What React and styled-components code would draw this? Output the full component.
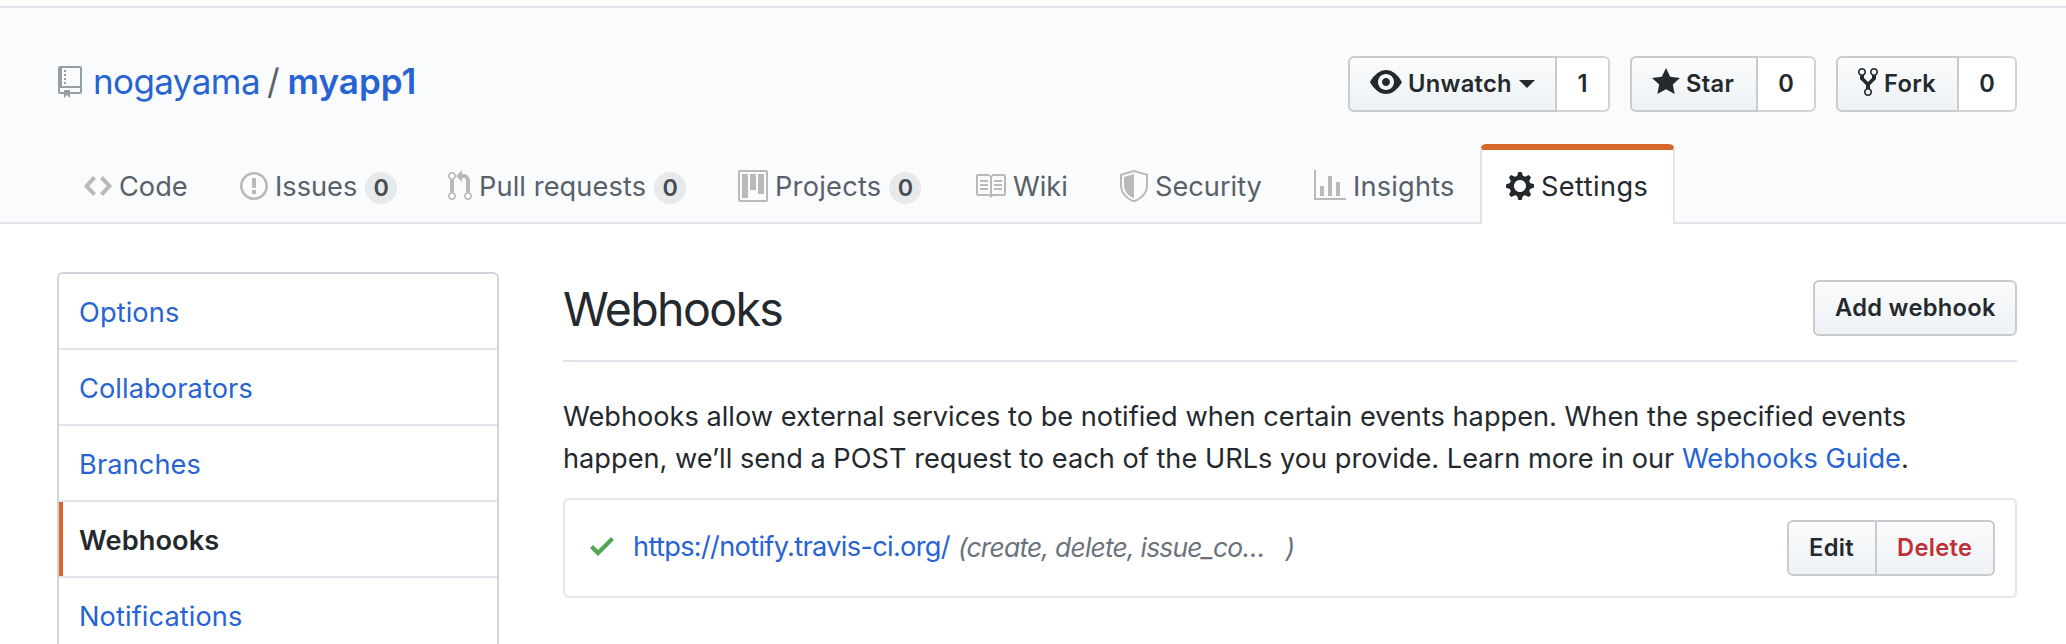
import React from "react";
import styled, { createGlobalStyle, css } from "styled-components";

const c = {
  text: "#24292e",
  muted: "#586069",
  gray: "#6a737d",
  blue: "#2764d2",
  orange: "#d4692b",
  line: "#e1e4e8",
  btnLine: "#c9cbce",
};

const Global = createGlobalStyle`
  * { box-sizing: border-box; }
  html, body { margin: 0; background: #fff; }
  body {
    height: 644px;
    overflow: hidden;
    font-family: Inter, "Liberation Sans", sans-serif;
    font-size: 27.2px;
    line-height: 42px;
    color: ${c.text};
  }
  a { color: inherit; text-decoration: none; }
`;

const PATHS = {
  repo: [12, "M4 9H3V8h1v1zm0-3H3v1h1V6zm0-2H3v1h1V4zm0-2H3v1h1V2zm8-1v12c0 .55-.45 1-1 1H6v2l-1.5-1.5L3 16v-2H1c-.55 0-1-.45-1-1V1c0-.55.45-1 1-1h10c.55 0 1 .45 1 1zm-1 10H1v2h2v-1h3v1h5v-2zm0-10H2v9h9V1z"],
  code: [14, "M9.5 3L8 4.5 11.5 8 8 11.5 9.5 13 14 8 9.5 3zm-5 0L0 8l4.5 5L6 11.5 2.5 8 6 4.5 4.5 3z"],
  issue: [14, "M7 2.3c3.14 0 5.7 2.56 5.7 5.7s-2.56 5.7-5.7 5.7A5.71 5.71 0 0 1 1.3 8c0-3.14 2.56-5.7 5.7-5.7zM7 1C3.14 1 0 4.14 0 8s3.14 7 7 7 7-3.14 7-7-3.14-7-7-7zm1 3H6v5h2V4zm0 6H6v2h2v-2z"],
  pull: [12, "M11 11.28V5c-.03-.78-.34-1.47-.94-2.06C9.46 2.35 8.78 2.03 8 2H7V0L4 3l3 3V4h1c.27.02.48.11.69.31.21.2.3.42.31.69v6.28A1.993 1.993 0 0 0 10 15a1.993 1.993 0 0 0 1-3.72zm-1 2.92c-.66 0-1.2-.55-1.2-1.2 0-.65.55-1.2 1.2-1.2.65 0 1.2.55 1.2 1.2 0 .65-.55 1.2-1.2 1.2zM4 3c0-1.11-.89-2-2-2a1.993 1.993 0 0 0-1 3.72v6.56A1.993 1.993 0 0 0 2 15a1.993 1.993 0 0 0 1-3.72V4.72c.59-.34 1-.98 1-1.72zm-.8 10c0 .66-.55 1.2-1.2 1.2-.65 0-1.2-.55-1.2-1.2 0-.65.55-1.2 1.2-1.2.65 0 1.2.55 1.2 1.2zM2 4.2C1.34 4.2.8 3.65.8 3c0-.65.55-1.2 1.2-1.2.65 0 1.2.55 1.2 1.2 0 .65-.55 1.2-1.2 1.2z"],
  project: [15, "M10 12h3V2h-3v10zm-4-2h3V2H6v8zm-4 4h3V2H2v12zm-1 1h13V1H1v14zM14 0H1a1 1 0 0 0-1 1v14a1 1 0 0 0 1 1h13a1 1 0 0 0 1-1V1a1 1 0 0 0-1-1z"],
  book: [16, "M3 5h4v1H3V5zm0 3h4V7H3v1zm0 2h4V9H3v1zm11-5h-4v1h4V5zm0 2h-4v1h4V7zm0 2h-4v1h4V9zm2-6v9c0 .55-.45 1-1 1H9.5l-1 1-1-1H2c-.55 0-1-.45-1-1V3c0-.55.45-1 1-1h5.5l1 1 1-1H15c.55 0 1 .45 1 1zm-8 .5L7.5 3H2v9h6V3.5zm7-.5H9.5l-.5.5V12h6V3z"],
  shield: [14, "M0 2l7-2 7 2v6.02C14 12.69 8.69 16 7 16c-1.69 0-7-3.31-7-7.98V2zm1 .75L7 1l6 1.75v5.268C13 12.104 8.449 15 7 15c-1.449 0-6-2.896-6-6.982V2.75zm1 .75L7 2v12c-1.207 0-5-2.482-5-5.985V3.5z"],
  graph: [16, "M16 14v1H0V0h1v14h15zM5 13H3V8h2v5zm4 0H7V3h2v10zm4 0h-2V6h2v7z"],
  gear: [14, "M14 8.77v-1.6l-1.94-.64-.45-1.09.88-1.84-1.13-1.13-1.81.91-1.09-.45-.69-1.92h-1.6l-.63 1.94-1.11.45-1.84-.88-1.13 1.13.91 1.81-.45 1.09L0 7.23v1.59l1.94.64.45 1.09-.88 1.84 1.13 1.13 1.81-.91 1.09.45.69 1.92h1.59l.63-1.94 1.11-.45 1.84.88 1.13-1.13-.92-1.81.47-1.09L14 8.75v.02zM7 11c-1.66 0-3-1.34-3-3s1.34-3 3-3 3 1.34 3 3-1.34 3-3 3z"],
  eye: [16, "M8.06 2C3 2 0 8 0 8s3 6 8.06 6C13 14 16 8 16 8s-3-6-7.94-6zM8 12c-2.2 0-4-1.78-4-4 0-2.2 1.8-4 4-4 2.22 0 4 1.8 4 4 0 2.22-1.78 4-4 4zm2-4c0 1.11-.89 2-2 2-1.11 0-2-.89-2-2 0-1.11.89-2 2-2 1.11 0 2 .89 2 2z"],
  star: [14, "M14 6l-4.9-.64L7 1 4.9 5.36 0 6l3.6 3.26L2.67 14 7 11.67 11.33 14l-.93-4.74L14 6z"],
  fork: [10, "M8 1a1.993 1.993 0 0 0-1 3.72V6L5 8 3 6V4.72A1.993 1.993 0 0 0 2 1a1.993 1.993 0 0 0-1 3.72V6.5l3 3v1.78A1.993 1.993 0 0 0 5 15a1.993 1.993 0 0 0 1-3.72V9.5l3-3V4.72A1.993 1.993 0 0 0 8 1zM2 4.2C1.34 4.2.8 3.65.8 3c0-.65.55-1.2 1.2-1.2.65 0 1.2.55 1.2 1.2 0 .65-.55 1.2-1.2 1.2zm3 10c-.66 0-1.2-.55-1.2-1.2 0-.65.55-1.2 1.2-1.2.65 0 1.2.55 1.2 1.2 0 .65-.55 1.2-1.2 1.2zm3-10c-.66 0-1.2-.55-1.2-1.2 0-.65.55-1.2 1.2-1.2.65 0 1.2.55 1.2 1.2 0 .65-.55 1.2-1.2 1.2z"],
  check: [12, "M12 5l-8 8-4-4 1.5-1.5L4 10l6.5-6.5L12 5z"],
};

const Svg = styled.svg`
  display: block;
  flex: none;
  fill: currentColor;
`;

function Icon({ name, className }) {
  const [w, d] = PATHS[name];
  return (
    <Svg className={className} width={w * 2} height={32} viewBox={`0 0 ${w} 16`} aria-hidden="true">
      <path fillRule="evenodd" d={d} />
    </Svg>
  );
}

const PageHead = styled.header`
  margin-top: 6px;
  height: 218px;
  padding: 48px 49px 0 57px;
  background: #fafbfc;
  border-top: 2px solid ${c.line};
  border-bottom: 2px solid ${c.line};
`;

const HeadRow = styled.div`
  display: flex;
  justify-content: space-between;
  height: 56px;
`;

const RepoTitle = styled.h1`
  display: flex;
  align-items: center;
  margin: 0 0 0 1px;
  height: 50px;
  font-size: 35px;
  font-weight: 400;
  line-height: 50px;
  color: ${c.muted};
`;

const RepoIcon = styled(Icon)`
  color: #959da5;
  margin: 2px 11px 0 0;
`;

const Owner = styled.a`
  color: ${c.blue};
  letter-spacing: -0.6px;
`;

const Slash = styled.span`
  margin: 0 8px 0 7px;
`;

const RepoName = styled.a`
  color: ${c.blue};
  font-weight: 600;
`;

const Actions = styled.div`
  display: flex;
  gap: 20px;
`;

const Group = styled.div`
  display: flex;
  flex: none;
`;

const Button = styled.button`
  display: flex;
  align-items: center;
  gap: 6px;
  width: ${(p) => p.$w}px;
  height: 56px;
  padding: 0 0 1px 20px;
  border: 2px solid ${c.btnLine};
  border-radius: 6px;
  background: linear-gradient(180deg, #fafbfc, #eff3f6 90%) padding-box;
  color: ${(p) => (p.$danger ? "#bf3036" : c.text)};
  font-family: inherit;
  font-size: 23.7px;
  font-weight: 600;
  line-height: 36px;
  letter-spacing: 0.3px;
  white-space: nowrap;
  ${(p) => p.$side === "left" && css`border-radius: 6px 0 0 6px;`}
  ${(p) => p.$side === "right" && css`border-left: 0; border-radius: 0 6px 6px 0;`}
`;

const ButtonIcon = styled(Icon)`
  margin-bottom: 3px;
`;

const Caret = styled.span`
  margin: 1px 0 0 1px;
  border: 8px solid transparent;
  border-top-color: currentColor;
  border-bottom: 0;
`;

const Count = styled.a`
  display: flex;
  align-items: center;
  justify-content: center;
  width: ${(p) => p.$w}px;
  height: 56px;
  padding-bottom: 1px;
  border: 2px solid #d1d3d5;
  border-left: 0;
  border-radius: 0 6px 6px 0;
  background: #fff;
  font-size: 23.6px;
  font-weight: 600;
`;

const Nav = styled.nav`
  display: flex;
  margin: 32px 0 0 1px;
`;

const Tab = styled.a`
  display: flex;
  align-items: center;
  flex: none;
  width: ${(p) => p.$w}px;
  height: 80px;
  padding: 0 0 2px 24px;
  border: 2px solid transparent;
  border-top-width: 6px;
  border-bottom: 0;
  color: ${c.muted};
  letter-spacing: ${(p) => p.$tracking}px;
  white-space: nowrap;
  ${(p) =>
    p.$active &&
    css`
      background: #fff;
      border-color: ${c.orange} ${c.line} transparent;
      border-radius: 6px 6px 0 0;
      color: ${c.text};
    `}
`;

const TabIcon = styled(Icon)`
  margin-right: 7px;
  color: ${(p) => (p.$active ? c.text : "#b7b9bb")};
`;

const TabLabel = styled.span`
  padding-top: 2px;
`;

const Badge = styled.span`
  width: 32px;
  height: 32px;
  margin: 4px 0 0 8px;
  border-radius: 16px;
  background: #e8e9eb;
  color: #444d56;
  font-size: 23.3px;
  font-weight: 600;
  line-height: 32px;
  letter-spacing: 0;
  text-align: center;
`;

const Body = styled.div`
  display: flex;
  align-items: flex-start;
  gap: 64px;
  padding: 48px 49px 0 57px;
`;

const Menu = styled.nav`
  flex: none;
  width: 442px;
  border: 2px solid #d1d5da;
  border-radius: 6px;
`;

const MenuItem = styled.a`
  display: flex;
  align-items: center;
  height: 76px;
  padding: 4px 20px 0;
  border-bottom: 2px solid ${c.line};
  color: ${c.blue};
  letter-spacing: 0.1px;
  ${(p) =>
    p.$active &&
    css`
      background: linear-gradient(${c.orange}, ${c.orange}) 0 0 / 4px 100% no-repeat;
      color: ${c.text};
      font-weight: 600;
    `}
`;

const Main = styled.main`
  flex: 1;
  min-width: 0;
`;

const Subhead = styled.div`
  display: flex;
  justify-content: space-between;
  height: 90px;
  padding-top: 8px;
  border-bottom: 2px solid ${c.line};
`;

const Heading = styled.h2`
  margin: 0;
  font-size: 46.5px;
  font-weight: 400;
  line-height: 58px;
  letter-spacing: -1.65px;
`;

const Intro = styled.p`
  margin: 34px 0 18px;
`;

const Link = styled.a`
  color: ${c.blue};
`;

const Hook = styled.div`
  display: flex;
  align-items: center;
  height: 100px;
  padding: 0 20px 0 25px;
  border: 2px solid #e5e5e5;
  border-radius: 6px;
`;

const HookInfo = styled.div`
  display: flex;
  align-items: center;
  flex: 1;
  margin-bottom: 2px;
  white-space: nowrap;
`;

const Check = styled(Icon)`
  margin: 0 19px 2px 0;
  color: #52a552;
`;

const Url = styled.a`
  color: ${c.blue};
  letter-spacing: -0.68px;
`;

const Events = styled.em`
  margin-left: ${(p) => p.$gap}px;
  color: ${c.gray};
  font-size: 26.4px;
  letter-spacing: -0.76px;
`;

const TABS = [
  ["code", "Code", 156, 0],
  ["issue", "Issues", 208, 0, "0"],
  ["pull", "Pull requests", 290, 0.1, "0"],
  ["project", "Projects", 236, 0.25, "0"],
  ["book", "Wiki", 146, 0],
  ["shield", "Security", 194, 0],
  ["graph", "Insights", 192, 0.2],
  ["gear", "Settings", 195, 0.4],
];

const MENU = ["Options", "Collaborators", "Branches", "Webhooks", "Notifications"];

const ACTIONS = [
  ["eye", "Unwatch", 209, "1", 53],
  ["star", "Star", 128, "0", 58],
  ["fork", "Fork", 123, "0", 58],
];

export default function App() {
  return (
    <>
      <Global />
      <PageHead>
        <HeadRow>
          <RepoTitle>
            <RepoIcon name="repo" />
            <Owner>nogayama</Owner>
            <Slash>/</Slash>
            <RepoName>myapp1</RepoName>
          </RepoTitle>
          <Actions>
            {ACTIONS.map(([icon, label, w, count, cw]) => (
              <Group key={label}>
                <Button $w={w} $side="left">
                  <ButtonIcon name={icon} />
                  {label}
                  {icon === "eye" && <Caret />}
                </Button>
                <Count $w={cw}>{count}</Count>
              </Group>
            ))}
          </Actions>
        </HeadRow>
        <Nav>
          {TABS.map(([icon, label, w, tracking, count]) => (
            <Tab key={label} $w={w} $tracking={tracking} $active={label === "Settings"}>
              <TabIcon name={icon} $active={label === "Settings"} />
              <TabLabel>{label}</TabLabel>
              {count && <Badge>{count}</Badge>}
            </Tab>
          ))}
        </Nav>
      </PageHead>
      <Body>
        <Menu>
          {MENU.map((m) => (
            <MenuItem key={m} $active={m === "Webhooks"}>
              {m}
            </MenuItem>
          ))}
        </Menu>
        <Main>
          <Subhead>
            <Heading>Webhooks</Heading>
            <Button $w={204}>Add webhook</Button>
          </Subhead>
          <Intro>
            Webhooks allow external services to be notified when certain events happen. When the specified events
            <br />
            happen, we’ll send a POST request to each of the URLs you provide. Learn more in our{" "}
            <Link>Webhooks Guide</Link>.
          </Intro>
          <Hook>
            <HookInfo>
              <Check name="check" />
              <Url>https://notify.travis-ci.org/</Url>
              <Events $gap={8}>(create, delete, issue_co…</Events>
              <Events $gap={21}>)</Events>
            </HookInfo>
            <Group>
              <Button $w={90} $side="left">Edit</Button>
              <Button $w={118} $side="right" $danger>Delete</Button>
            </Group>
          </Hook>
        </Main>
      </Body>
    </>
  );
}
